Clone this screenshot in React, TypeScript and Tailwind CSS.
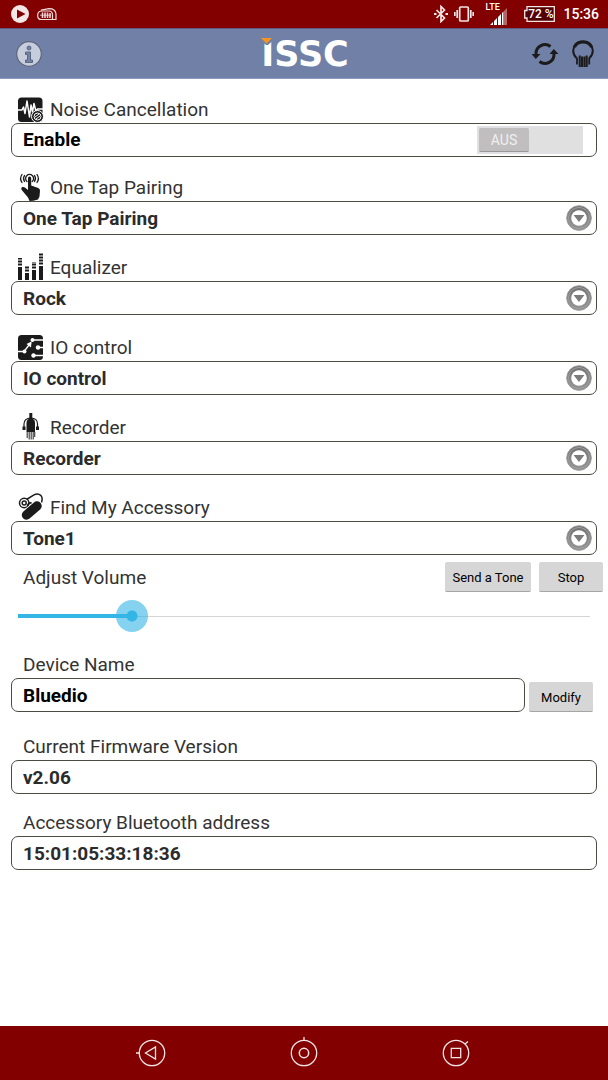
import { useState } from 'react';
import type { ReactNode } from 'react';
import clsx from 'clsx';

const boxClass = 'h-[34px] w-full rounded-[7px] border border-[#4d4b44] bg-white pl-[11px] text-[19px] leading-6 font-bold';

const NoiseIcon = () => (
  <svg viewBox="0 0 26 26" className="h-[26px] w-[26px]">
    <rect x="0" y="0.5" width="24.500" height="24.500" rx="3.500" fill="#1c1b1b" />
    <path d="M0 13h4l1.500-3L7 16.500 9 4l2.500 16L13 8l1.500 7L16 6.500l2 8 1.500-2.500H25" fill="none" stroke="#fff" strokeWidth="1.500" strokeLinejoin="round" />
    <circle cx="19.500" cy="19.500" r="6" fill="#1c1b1b" stroke="#fff" strokeWidth="1" />
    <circle cx="19.500" cy="19.500" r="3.500" fill="none" stroke="#fff" strokeWidth="1" />
    <path d="M17 20l4-3M18 22l4-3" stroke="#fff" strokeWidth="1" />
  </svg>
);

const TapIcon = () => (
  <svg viewBox="0 0 26 28" className="h-7 w-[26px]">
    <g fill="none" stroke="#1c1b1b" strokeWidth="1.300" strokeLinecap="round">
      <path d="M4 1.500q-2.800 4 0 8M6.500 2.500q-2 3 0 6M19 1.500q2.800 4 0 8M16.500 2.500q2 3 0 6" />
      <path d="M9 8.500a4 4 0 1 1 5.200 0" />
    </g>
    <path d="M10 5q0-1.600 1.600-1.600T13.200 5v7.500l7 2.500q1.800.7 1.800 2.500l-.5 6-1.500 3q-5 1.500-8.500 1.500L10 24.500 3.700 17q-1.200-2.200.8-3 1.500-.3 2.700.8L10 17z" fill="#1c1b1b" />
  </svg>
);

const EqualizerIcon = () => (
  <svg viewBox="0 0 26 28" className="h-7 w-[26px]" fill="none" stroke="#1c1b1b" strokeWidth="4">
    <path d="M2 27V14M9 27v-7M16 27V17M23 27V13" />
    <path d="M2 12.500V5M9 18.500V13M16 15.500V9M23 11.500V0" strokeDasharray="2 1" />
  </svg>
);

const IoIcon = () => (
  <svg viewBox="0 0 26 26" className="h-[26px] w-[26px]">
    <rect x="0" y="0" width="25" height="25" rx="3.500" fill="#1c1b1b" />
    <path d="M0 16.500h6l7-9M14.500 5H25M20 12.500h5M15.500 20.500H25" fill="none" stroke="#fff" strokeWidth="1.300" />
    <path d="M13.500 6.500l-.5 6-4.500-3.500z" fill="#fff" />
    <g fill="#fff">
      <circle cx="6.500" cy="16.500" r="2" />
      <circle cx="14.500" cy="5" r="2" />
      <circle cx="20" cy="12.500" r="2.200" />
      <circle cx="15.500" cy="20.500" r="2.200" />
    </g>
  </svg>
);

const RecorderIcon = () => (
  <svg viewBox="0 0 26 28" className="h-7 w-[26px]" fill="#1c1b1b">
    <path d="M11.300 0h3v6h-3z" />
    <path d="M8.500 19V10q0-4.500 4.300-4.500T17 10v9z" />
    <path d="M6 17v-6q0-5.800 6.800-5.800T19.500 11v6" fill="none" stroke="#1c1b1b" strokeWidth="1.200" />
    <path d="M4.500 13.500h3v3.500h-3zM18 13.500h3v3.500h-3z" />
    <path d="M9.200 19v6M11.200 19v7.500M13.200 19v7.500M15.200 19v7.500M16.700 19v5" stroke="#444" strokeWidth="1.200" />
  </svg>
);

const AccessoryIcon = () => (
  <svg viewBox="0 0 26 28" className="h-7 w-[26px]">
    <path d="M8.500 6.500L16 1.800q4-2 7 .8 2 2.500.5 7" fill="none" stroke="#1c1b1b" strokeWidth="1.500" />
    <circle cx="6.200" cy="10" r="4.700" fill="none" stroke="#1c1b1b" strokeWidth="1.500" />
    <circle cx="6.200" cy="10" r="2" fill="none" stroke="#1c1b1b" strokeWidth="1.500" />
    <path d="M8.500 22L19 13" stroke="#fff" strokeWidth="11" strokeLinecap="round" />
    <path d="M8.500 22L19 13" stroke="#1c1b1b" strokeWidth="9.500" strokeLinecap="round" />
    <path d="M9.500 13q1-3.500 4-3" fill="none" stroke="#1c1b1b" strokeWidth="1.800" />
  </svg>
);

const DropIcon = () => (
  <svg viewBox="0 0 26 26" className="pointer-events-none absolute top-1 right-[5px] h-[26px] w-[26px]">
    <defs>
      <linearGradient id="ring" x1="0" y1="0" x2="0" y2="1">
        <stop offset="0" stopColor="#6f6f6f" />
        <stop offset="1" stopColor="#979797" />
      </linearGradient>
    </defs>
    <circle cx="13" cy="13" r="12.300" fill="url(#ring)" stroke="#9a9a9a" />
    <circle cx="13" cy="13" r="10.500" fill="none" stroke="#a0a0a0" strokeWidth="1" />
    <circle cx="13" cy="13" r="7.800" fill="#fff" />
    <path d="M7.500 10h11L13 17z" fill="#7c7c7c" />
  </svg>
);

const StatusBar = () => (
  <div className="flex h-7 items-center justify-between bg-[#820000] pr-[9px] pl-[11px] text-white">
    <div className="flex items-center gap-2">
      <svg viewBox="0 0 18 18" className="h-[18px] w-[18px]">
        <circle cx="9" cy="9" r="9" fill="#f3e6e6" />
        <path d="M6 4.500l8.500 4.500L6 13.500z" fill="#820000" />
      </svg>
      <svg viewBox="0 0 20 14" className="h-[14px] w-5" fill="none" stroke="#f0dcdc" strokeWidth="1.200">
        <path d="M4 3.200L12 1.700q6.500 0 7 5.300v5.500h-4" />
        <path d="M4 4h8q3.500 0 3.500 4v4.500H4Q.7 12.500.7 8.500T4 4z" />
        <path d="M5.500 5.500V11M8 5.500V11M10.500 5.500V11M13 6v5" strokeWidth="1.500" />
        <path d="M3 8.200h11" strokeWidth="0.800" />
      </svg>
    </div>
    <div className="flex items-center">
      <svg viewBox="0 0 14 18" className="mr-[6px] h-[18px] w-[14px]" fill="none" stroke="#f3e6e6" strokeWidth="1.700">
        <path d="M2.500 5l8 8L7 16.500v-15L10.500 5l-8 8" />
        <path d="M0 9h2.500M11.500 9H14" strokeWidth="2" />
      </svg>
      <svg viewBox="0 0 20 16" className="mr-[11px] h-4 w-5" fill="none" stroke="#f3e6e6" strokeWidth="1.700">
        <rect x="5.700" y="1" width="8.600" height="14" rx="1" />
        <path d="M3.200 4v8M.8 6v4M16.800 4v8M19.200 6v4" />
      </svg>
      <div className="relative mr-[17px] h-[22px] w-[22px]">
        <span className="absolute top-0 left-0 text-[9px] leading-[9px] font-medium">LTE</span>
        <svg viewBox="0 0 17 17" className="absolute right-0 bottom-0 h-[17px] w-[17px]">
          <path d="M0 17l3-3v3zM4 13l3-3v7H4zM8 9l3-3v11H8zM12 5l1.500-1.500V17H12z" fill="#fff" />
          <path d="M14 3l3-3v17h-3z" fill="#b36666" />
        </svg>
      </div>
      <div className="relative mr-2 flex h-4 w-[31px] items-center justify-center">
        <svg viewBox="0 0 31 16" className="absolute inset-0 h-4 w-[31px]">
          <path d="M3 .7h27.300v14.600H3V12H.7V4.500H3z" fill="#520000" stroke="#f3e6e6" strokeWidth="1.300" />
        </svg>
        <span className="relative pl-[2px] text-[12px] leading-4 font-medium whitespace-nowrap">72 %</span>
      </div>
      <span className="text-[14px] leading-5 font-medium">15:36</span>
    </div>
  </div>
);

const Header = () => (
  <header className="flex h-[51px] items-center justify-between border-t border-b border-t-[#625b7d] border-b-[#8b9abd] bg-[#7080a6] pr-[14px] pl-4">
    <div className="flex flex-1">
      <button aria-label="Info">
        <svg viewBox="0 0 26 26" className="h-[26px] w-[26px]">
          <circle cx="13" cy="13" r="12.300" fill="#c6cede" stroke="#60657a" strokeWidth="1.200" />
          <circle cx="13" cy="7" r="2" fill="#7584a5" stroke="#53617d" strokeWidth="0.900" />
          <path d="M9.500 11h5v8h2v2.500h-7V19h2v-5.500h-2z" fill="#7584a5" stroke="#53617d" strokeWidth="0.900" />
        </svg>
      </button>
    </div>
    <h1 className="relative font-['DejaVu_Sans'] text-[35px] leading-[50px] font-bold text-white">
      ISSC
      <svg viewBox="0 0 12 7" className="absolute top-[9px] left-0 h-[7px] w-3">
        <path d="M0 0h12v2.500L7 7H5L0 2.500z" fill="#7080a6" />
        <path d="M0 0h11L5.500 5.500z" fill="#f7931e" />
      </svg>
    </h1>
    <div className="flex flex-1 items-center justify-end gap-[13px]">
      <button aria-label="Refresh">
        <svg viewBox="0 0 28 26" className="h-[26px] w-7">
          <path d="M5 13a9 9 0 0 1 14.500-7.500M23 13a9 9 0 0 1-14.500 7.500" fill="none" stroke="#1c1b1b" strokeWidth="3" />
          <path d="M.5 13h9l-4.700 5zM18.500 13h9l-4.700-5z" fill="#1c1b1b" />
        </svg>
      </button>
      <button aria-label="Headset">
        <svg viewBox="0 0 22 28" className="h-7 w-[22px]" fill="none" stroke="#1c1b1b">
          <path d="M4.500 18Q1.200 15 1.200 10.500 2 1.500 11 1.500t9.800 9q0 4.500-3.300 7.500" strokeWidth="2" />
          <path d="M2.500 7Q5 2 11 2T19.500 7" strokeWidth="3" />
          <path d="M5 17.500v7M17.200 17.500v7" strokeWidth="1.800" />
          <path d="M7.700 15.500V27M10 16.500V27M12.400 16.500V27M14.700 15.500V27" strokeWidth="2" />
        </svg>
      </button>
    </div>
  </header>
);

type FieldProps = {
  id: string;
  label: string;
  icon?: ReactNode;
  className?: string;
  children: ReactNode;
};

function Field({ id, label, icon, className, children }: FieldProps) {
  return (
    <section className={clsx('px-[11px]', className)}>
      <label htmlFor={id} className={clsx('flex h-7 items-end text-[19px] leading-[26px] text-[#333]', icon ? 'gap-[6px] pl-[7px]' : 'pl-3')}>
        {icon}
        {label}
      </label>
      {children}
    </section>
  );
}

const selects = [
  { id: 'pairing', label: 'One Tap Pairing', icon: <TapIcon />, options: ['One Tap Pairing'], className: 'mt-4' },
  { id: 'equalizer', label: 'Equalizer', icon: <EqualizerIcon />, options: ['Rock'], className: 'mt-[18px]' },
  { id: 'io', label: 'IO control', icon: <IoIcon />, options: ['IO control'], className: 'mt-[18px]' },
  { id: 'recorder', label: 'Recorder', icon: <RecorderIcon />, options: ['Recorder'], className: 'mt-[18px]' },
  { id: 'find', label: 'Find My Accessory', icon: <AccessoryIcon />, options: ['Tone1'], className: 'mt-[18px]' },
];

const grayButton = 'h-[30px] rounded-[2px] border-b border-[#a5a5a5] bg-[#d6d6d6] pt-[2px] text-[13px] leading-5 text-black';

export default function App() {
  const [noise, setNoise] = useState(false);
  const [volume, setVolume] = useState(20);
  const [name, setName] = useState('Bluedio');

  return (
    <div className="flex min-h-screen flex-col bg-white font-[Roboto,sans-serif]">
      <StatusBar />
      <Header />

      <main className="flex-1 pb-8">
        <Field id="noise" label="Noise Cancellation" icon={<NoiseIcon />} className="mt-4">
          <div className={clsx(boxClass, 'flex items-center justify-between pr-[13px] text-black')}>
            <span>Enable</span>
            <label className="flex h-7 w-[106px] bg-[#e0e0e0] p-[2px]">
              <input id="noise" type="checkbox" role="switch" checked={noise} onChange={(e) => setNoise(e.target.checked)} className="peer sr-only" />
              <span className="flex h-6 w-[50px] items-center justify-center rounded-[2px] border-b border-[#999] bg-[#c0bebf] text-[14px] leading-5 font-normal text-[#f0f0f0] peer-checked:ml-auto">
                {noise ? 'EIN' : 'AUS'}
              </span>
            </label>
          </div>
        </Field>

        {selects.map((s) => (
          <Field key={s.id} id={s.id} label={s.label} icon={s.icon} className={s.className}>
            <div className="relative">
              <select id={s.id} className={clsx(boxClass, 'block appearance-none pt-[2px] text-[#2b2b2b]')}>
                {s.options.map((o) => <option key={o}>{o}</option>)}
              </select>
              <DropIcon />
            </div>
          </Field>
        ))}

        <div className="mt-[7px] flex items-center pr-[5px] pl-[23px]">
          <label htmlFor="volume" className="flex-1 pt-[2px] text-[19px] leading-7 text-[#333]">Adjust Volume</label>
          <button className={clsx(grayButton, 'w-[86px]')}>Send a Tone</button>
          <button className={clsx(grayButton, 'ml-2 w-16')}>Stop</button>
        </div>

        <div className="relative mx-[18px] mt-2 flex h-8 items-center">
          <div className="h-px w-full bg-[#d5d5d5]"></div>
          <div className="absolute left-0 h-1 bg-[#33b5e5]" style={{ width: `${volume}%` }}></div>
          <input
            id="volume"
            type="range"
            min={0}
            max={100}
            value={volume}
            onChange={(e) => setVolume(Number(e.target.value))}
            className="absolute -left-4 h-8 w-[calc(100%+32px)] appearance-none bg-transparent [&::-webkit-slider-thumb]:h-8 [&::-webkit-slider-thumb]:w-8 [&::-webkit-slider-thumb]:appearance-none [&::-webkit-slider-thumb]:rounded-full [&::-webkit-slider-thumb]:bg-[radial-gradient(circle,#33b5e5_5px,rgba(51,181,229,0.6)_6px)]"
          />
        </div>

        <Field id="device" label="Device Name" className="mt-[18px]">
          <div className="flex items-end gap-1 pr-1">
            <input id="device" value={name} onChange={(e) => setName(e.target.value)} className={clsx(boxClass, 'min-w-0 flex-1 text-black')} />
            <button className={clsx(grayButton, 'w-16')}>Modify</button>
          </div>
        </Field>

        <Field id="firmware" label="Current Firmware Version" className="mt-5">
          <input id="firmware" readOnly value="v2.06" className={clsx(boxClass, 'block text-[#2b2b2b]')} />
        </Field>

        <Field id="address" label="Accessory Bluetooth address" className="mt-[14px]">
          <input id="address" readOnly value="15:01:05:33:18:36" className={clsx(boxClass, 'block text-[#2b2b2b]')} />
        </Field>
      </main>

      <nav className="grid h-[54px] grid-cols-3 items-center justify-items-center bg-[#820000] px-[12.5%]">
        <button aria-label="Back">
          <svg viewBox="0 0 32 32" className="h-8 w-8" fill="none" stroke="#f0e6e6" strokeWidth="1.300">
            <circle cx="16" cy="16" r="12.700" />
            <path d="M0 16h3.500M19.500 10v12L9.500 16z" />
          </svg>
        </button>
        <button aria-label="Home">
          <svg viewBox="0 0 32 32" className="h-8 w-8" fill="none" stroke="#f0e6e6" strokeWidth="1.300">
            <circle cx="16" cy="16" r="12.700" />
            <circle cx="16" cy="16" r="4.700" strokeWidth="1.500" />
            <path d="M16 0v3.500" />
          </svg>
        </button>
        <button aria-label="Recent apps">
          <svg viewBox="0 0 32 32" className="h-8 w-8" fill="none" stroke="#f0e6e6" strokeWidth="1.300">
            <circle cx="16" cy="16" r="12.700" />
            <path d="M11.300 11.300h9.400v9.400h-9.400zM25 7l3-2.500" />
          </svg>
        </button>
      </nav>
    </div>
  );
}
